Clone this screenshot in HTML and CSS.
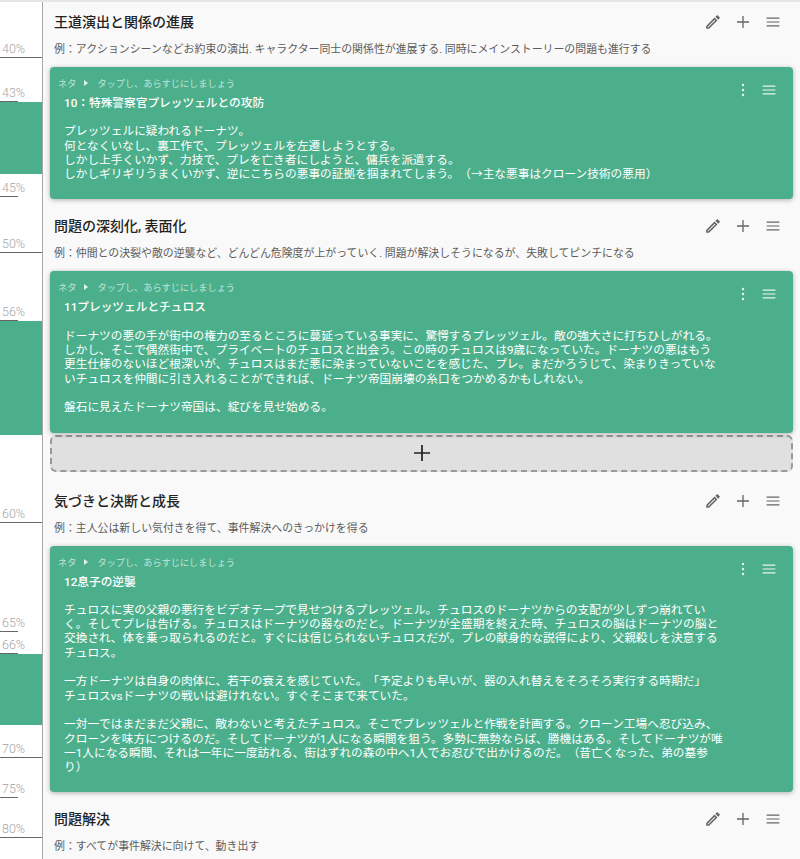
FILE: index.html
```html
<!DOCTYPE html>
<html lang="ja">
<head>
    <meta charset="UTF-8">
    <title>プロット</title>
    <link rel="stylesheet" href="styles.css">
</head>
<body>
    <svg class="icon-defs" width="0" height="0">
        <symbol id="i-pencil" viewBox="0 0 24 24"><path transform="translate(2.9 2.9) scale(.76)" fill="currentColor" d="M14.06 9.02l.92.92L5.92 19H5v-.92l9.06-9.06M17.66 3c-.25 0-.51.1-.7.29l-1.83 1.83 3.75 3.75 1.83-1.83c.39-.39.39-1.02 0-1.41l-2.34-2.34c-.2-.2-.45-.29-.71-.29zm-3.6 3.19L3 17.25V21h3.75L17.81 9.94l-3.75-3.75z"/></symbol>
        <symbol id="i-plus" viewBox="0 0 24 24"><path fill="none" stroke="currentColor" stroke-width="1.3" d="M12 6v12M6 12h12"/></symbol>
        <symbol id="i-menu" viewBox="0 0 24 24"><path fill="none" stroke="currentColor" stroke-width="1.2" d="M5.6 8.2h12.8M5.6 12h12.8M5.6 15.8h12.8"/></symbol>
        <symbol id="i-dots" viewBox="0 0 24 24"><circle cx="12" cy="7" r="1.2" fill="currentColor"/><circle cx="12" cy="12" r="1.2" fill="currentColor"/><circle cx="12" cy="17" r="1.2" fill="currentColor"/></symbol>
    </svg>

    <div class="page">
        <aside class="rail">
            <div class="block" style="top:102px;height:72px"></div>
            <div class="block" style="top:321px;height:114px"></div>
            <div class="block" style="top:654px;height:71px"></div>
            <div class="mark major" style="top:57px"><span>40%</span></div>
            <div class="mark" style="top:101px"><span>43%</span></div>
            <div class="mark" style="top:196px"><span>45%</span></div>
            <div class="mark major" style="top:252px"><span>50%</span></div>
            <div class="mark" style="top:320px"><span>56%</span></div>
            <div class="mark major" style="top:522px"><span>60%</span></div>
            <div class="mark" style="top:631px"><span>65%</span></div>
            <div class="mark" style="top:653px"><span>66%</span></div>
            <div class="mark major" style="top:757px"><span>70%</span></div>
            <div class="mark" style="top:797px"><span>75%</span></div>
            <div class="mark major" style="top:837px"><span>80%</span></div>
        </aside>

        <main class="content">
            <section class="beat">
                <header class="beat-head">
                    <h2>王道演出と関係の進展</h2>
                    <div class="beat-tools">
                        <svg class="icon"><use href="#i-pencil"/></svg>
                        <svg class="icon"><use href="#i-plus"/></svg>
                        <svg class="icon"><use href="#i-menu"/></svg>
                    </div>
                </header>
                <p class="beat-note">例：アクションシーンなどお約束の演出. キャラクター同士の関係性が進展する. 同時にメインストーリーの問題も進行する</p>
                <article class="card">
                    <div class="card-meta"><span>ネタ</span><i class="arrow"></i><span>タップし、あらすじにしましょう</span></div>
                    <div class="card-tools">
                        <svg class="icon"><use href="#i-dots"/></svg>
                        <svg class="icon"><use href="#i-menu"/></svg>
                    </div>
                    <h3>10：特殊警察官プレッツェルとの攻防</h3>
                    <p>プレッツェルに疑われるドーナツ。<br>何となくいなし、裏工作で、プレッツェルを左遷しようとする。<br>しかし上手くいかず、力技で、プレを亡き者にしようと、傭兵を派遣する。<br>しかしギリギリうまくいかず、逆にこちらの悪事の証拠を掴まれてしまう。（→主な悪事はクローン技術の悪用）</p>
                </article>
            </section>

            <section class="beat">
                <header class="beat-head">
                    <h2>問題の深刻化, 表面化</h2>
                    <div class="beat-tools">
                        <svg class="icon"><use href="#i-pencil"/></svg>
                        <svg class="icon"><use href="#i-plus"/></svg>
                        <svg class="icon"><use href="#i-menu"/></svg>
                    </div>
                </header>
                <p class="beat-note">例：仲間との決裂や敵の逆襲など、どんどん危険度が上がっていく. 問題が解決しそうになるが、失敗してピンチになる</p>
                <article class="card">
                    <div class="card-meta"><span>ネタ</span><i class="arrow"></i><span>タップし、あらすじにしましょう</span></div>
                    <div class="card-tools">
                        <svg class="icon"><use href="#i-dots"/></svg>
                        <svg class="icon"><use href="#i-menu"/></svg>
                    </div>
                    <h3>11プレッツェルとチュロス</h3>
                    <p>ドーナツの悪の手が街中の権力の至るところに蔓延っている事実に、驚愕するプレッツェル。敵の強大さに打ちひしがれる。しかし、そこで偶然街中で、プライベートのチュロスと出会う。この時のチュロスは9歳になっていた。ドーナツの悪はもう<br>更生仕様のないほど根深いが、チュロスはまだ悪に染まっていないことを感じた、プレ。まだかろうじて、染まりきっていないチュロスを仲間に引き入れることができれば、ドーナツ帝国崩壊の糸口をつかめるかもしれない。<br><br>盤石に見えたドーナツ帝国は、綻びを見せ始める。</p>
                </article>
                <div class="add-card"><svg class="icon-add"><use href="#i-plus"/></svg></div>
            </section>

            <section class="beat">
                <header class="beat-head">
                    <h2>気づきと決断と成長</h2>
                    <div class="beat-tools">
                        <svg class="icon"><use href="#i-pencil"/></svg>
                        <svg class="icon"><use href="#i-plus"/></svg>
                        <svg class="icon"><use href="#i-menu"/></svg>
                    </div>
                </header>
                <p class="beat-note">例：主人公は新しい気付きを得て、事件解決へのきっかけを得る</p>
                <article class="card">
                    <div class="card-meta"><span>ネタ</span><i class="arrow"></i><span>タップし、あらすじにしましょう</span></div>
                    <div class="card-tools">
                        <svg class="icon"><use href="#i-dots"/></svg>
                        <svg class="icon"><use href="#i-menu"/></svg>
                    </div>
                    <h3>12息子の逆襲</h3>
                    <p>チュロスに実の父親の悪行をビデオテープで見せつけるプレッツェル。チュロスのドーナツからの支配が少しずつ崩れていく。そしてプレは告げる。チュロスはドーナツの器なのだと。ドーナツが全盛期を終えた時、チュロスの脳はドーナツの脳と交換され、体を乗っ取られるのだと。すぐには信じられないチュロスだが。プレの献身的な説得により、父親殺しを決意するチュロス。<br><br>一方ドーナツは自身の肉体に、若干の衰えを感じていた。「予定よりも早いが、器の入れ替えをそろそろ実行する時期だ」<br>チュロスvsドーナツの戦いは避けれない。すぐそこまで来ていた。<br><br>一対一ではまだまだ父親に、敵わないと考えたチュロス。そこでプレッツェルと作戦を計画する。クローン工場へ忍び込み、クローンを味方につけるのだ。そしてドーナツが1人になる瞬間を狙う。多勢に無勢ならば、勝機はある。そしてドーナツが唯一1人になる瞬間、それは一年に一度訪れる、街はずれの森の中へ1人でお忍びで出かけるのだ。（昔亡くなった、弟の墓参り）</p>
                </article>
            </section>

            <section class="beat">
                <header class="beat-head">
                    <h2>問題解決</h2>
                    <div class="beat-tools">
                        <svg class="icon"><use href="#i-pencil"/></svg>
                        <svg class="icon"><use href="#i-plus"/></svg>
                        <svg class="icon"><use href="#i-menu"/></svg>
                    </div>
                </header>
                <p class="beat-note">例：すべてが事件解決に向けて、動き出す</p>
            </section>
        </main>
    </div>
</body>
</html>
```
FILE: styles.css
```css
html, body {
    margin: 0;
    height: 859px;
    overflow: hidden;
}
body {
    font-family: "Roboto", "Noto Sans CJK JP", sans-serif;
    text-spacing-trim: space-all;
    background-color: #f9f9f9;
    color: #222;
    position: relative;
}
body::before {
    content: "";
    position: absolute;
    z-index: 2;
    top: 0;
    left: 0;
    right: 0;
    height: 2px;
    background-color: #e6e6e6;
}
.icon-defs {
    position: absolute;
}
.page {
    display: flex;
    height: 859px;
}
.rail {
    position: relative;
    flex: 0 0 42px;
    background-color: #fff;
    border-right: 1px solid #a8a8a8;
}
.block {
    position: absolute;
    left: 0;
    right: 0;
    background-color: #4caf8c;
}
.mark {
    position: absolute;
    left: 0;
    width: 18px;
    height: 1px;
    background-color: #666;
}
.mark.major {
    width: 42px;
}
.mark span {
    position: absolute;
    left: 2px;
    bottom: 2px;
    font-size: 12.5px;
    font-weight: 300;
    line-height: 15px;
    color: #a6a6a6;
}
.content {
    flex: 1;
    min-width: 0;
    padding: 0 7px;
}
.beat {
    margin-top: 5px;
}
.beat:first-child {
    margin-top: 0;
}
.beat-head {
    display: flex;
    justify-content: space-between;
    align-items: center;
    height: 24px;
    padding: 10px 0 0 4px;
}
.beat-head h2 {
    margin: 0;
    font-size: 14px;
    font-weight: 500;
    line-height: 24px;
    color: #222;
}
.beat-tools {
    display: flex;
    gap: 6px;
    padding-right: 8px;
}
.icon {
    width: 24px;
    height: 24px;
    color: #666;
}
.beat-note {
    margin: 8px 0 0 4px;
    font-size: 10.9px;
    line-height: 16px;
    color: #5c5c5c;
}
.card {
    position: relative;
    margin-top: 9px;
    padding: 8px 16px 18px 8px;
    border-radius: 4px;
    background-color: #4caf8c;
    color: #fff;
    box-shadow: 0 1px 5px rgba(0, 0, 0, 0.3);
}
.card-meta {
    display: flex;
    align-items: center;
    height: 16px;
    font-size: 9.2px;
    color: #c4e3d7;
}
.arrow {
    width: 0;
    height: 0;
    margin: 0 9px 0 8px;
    border-left: 4px solid #e4f2ec;
    border-top: 3.5px solid transparent;
    border-bottom: 3.5px solid transparent;
}
.card-tools {
    position: absolute;
    top: 11px;
    right: 12px;
    display: flex;
    gap: 2px;
}
.card-tools .icon {
    color: #e8f5f0;
}
.card h3 {
    margin: 5px 0 0 6px;
    font-size: 11.7px;
    font-weight: 500;
    line-height: 14.3px;
}
.card p {
    width: 659.5px;
    margin: 14px 0 0 6px;
    font-size: 11.7px;
    line-height: 14.3px;
}
.add-card {
    display: flex;
    justify-content: center;
    align-items: center;
    height: 33px;
    margin: 2px 0 7px;
    border: 2px dashed #999;
    border-radius: 6px;
    background-color: #e0e0e0;
}
.icon-add {
    width: 32px;
    height: 32px;
    color: #222;
}
```
